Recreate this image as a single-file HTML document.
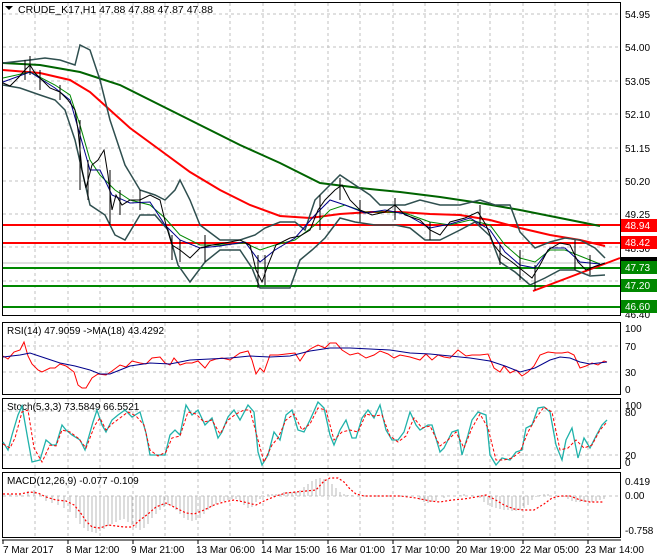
<!DOCTYPE html>
<html><head><meta charset="utf-8"><style>
html,body{margin:0;padding:0;background:#fff;}
svg{display:block;font-family:"Liberation Sans",sans-serif;}
</style></head><body>
<svg width="660" height="560" viewBox="0 0 660 560" xmlns="http://www.w3.org/2000/svg">
<rect width="660" height="560" fill="#fff"/>
<g stroke="#c0c0c0" stroke-dasharray="3,3" stroke-width="1">
<path d="M35 3V316M68 3V316M100 3V316M133 3V316M165 3V316M198 3V316M230 3V316M263 3V316M295 3V316M328 3V316M360 3V316M393 3V316M425 3V316M458 3V316M490 3V316M523 3V316M555 3V316M588 3V316"/>
<path d="M35 323V394M68 323V394M100 323V394M133 323V394M165 323V394M198 323V394M230 323V394M263 323V394M295 323V394M328 323V394M360 323V394M393 323V394M425 323V394M458 323V394M490 323V394M523 323V394M555 323V394M588 323V394"/>
<path d="M35 399V468M68 399V468M100 399V468M133 399V468M165 399V468M198 399V468M230 399V468M263 399V468M295 399V468M328 399V468M360 399V468M393 399V468M425 399V468M458 399V468M490 399V468M523 399V468M555 399V468M588 399V468"/>
<path d="M35 473V537M68 473V537M100 473V537M133 473V537M165 473V537M198 473V537M230 473V537M263 473V537M295 473V537M328 473V537M360 473V537M393 473V537M425 473V537M458 473V537M490 473V537M523 473V537M555 473V537M588 473V537"/>
<path d="M3 14H620M3 47H620M3 81H620M3 114H620M3 148H620M3 181H620M3 214H620M3 247H620M3 281H620"/>
<path d="M3 346H620M3 372H620M3 411H620M3 455H620M3 496H620"/>
</g>
<line x1="3" y1="263" x2="620" y2="263" stroke="#c0c0c0"/>
<line x1="3" y1="225" x2="620" y2="225" stroke="#f00" stroke-width="2"/>
<line x1="3" y1="243" x2="620" y2="243" stroke="#f00" stroke-width="2"/>
<line x1="3" y1="268" x2="620" y2="268" stroke="#080" stroke-width="2"/>
<line x1="3" y1="286" x2="620" y2="286" stroke="#080" stroke-width="2"/>
<line x1="3" y1="307" x2="620" y2="307" stroke="#080" stroke-width="2"/>
<line x1="533" y1="291" x2="620" y2="258" stroke="#f00" stroke-width="2"/>
<polyline fill="none" stroke="#006400" stroke-width="2" points="3,63 40,65 80,72 120,85 160,105 200,125 240,145 280,163 320,183 360,188 400,192 440,197 480,203 520,210 560,218 600,226"/>
<polyline fill="none" stroke="#f00" stroke-width="2" points="3,70 40,73 70,80 90,92 110,110 130,128 160,150 190,172 220,190 250,205 280,216 310,218 340,214 370,212 400,212 430,214 460,215 490,220 520,228 550,235 580,240 605,246"/>
<g fill="none" stroke="#2f4f4f" stroke-width="1.5">
<polyline points="3,63 30,60 45,58 60,60 75,65 80,45 90,50 100,80 110,120 125,165 140,190 155,195 165,200 175,190 180,180 190,200 200,225 220,240 240,240 255,235 265,228 280,222 295,222 305,230 315,200 330,185 340,175 355,185 370,195 380,205 390,205 405,205 420,200 440,205 460,205 480,200 495,205 510,205 520,232 535,248 550,242 565,238 580,240 595,248 605,258"/>
<polyline points="3,85 20,88 40,95 55,100 65,110 75,140 90,205 105,215 115,235 125,240 140,215 155,215 168,230 178,265 190,282 205,262 220,250 240,250 252,268 260,288 275,288 290,288 300,260 312,250 325,238 340,218 355,222 375,225 395,225 410,228 425,240 440,240 460,230 475,222 490,236 500,262 515,272 530,285 545,278 560,270 575,270 590,276 605,275"/>
</g>
<g fill="none" stroke-width="1">
<polyline stroke="#080" points="3,78 30,72 55,85 70,95 80,125 90,160 100,175 115,190 130,200 150,205 165,218 180,235 200,245 220,245 245,243 260,250 275,245 295,240 315,225 330,210 345,205 365,212 385,212 405,213 430,222 450,225 470,220 490,225 505,245 520,258 535,262 550,250 565,250 580,256 600,264"/>
<polyline stroke="#00008b" points="3,82 30,72 55,88 70,100 80,135 90,170 100,170 112,195 130,203 150,202 165,225 180,240 200,248 220,246 245,242 260,262 275,250 295,238 315,215 330,200 345,205 365,213 385,210 405,214 430,228 450,224 470,218 490,230 505,252 520,265 535,268 550,248 565,248 580,262 600,264"/>
</g>
<polyline fill="none" stroke="#000" stroke-width="1" points="3,83 10,86 18,78 25,70 30,65 35,73 42,80 50,88 60,92 68,100 75,110 78,130 82,170 86,188 92,165 98,160 104,150 108,175 112,210 116,195 122,205 130,200 140,200 150,195 160,200 166,225 172,245 180,250 190,258 200,248 212,245 225,243 240,240 250,245 256,270 262,282 268,265 276,245 290,238 300,236 310,230 318,210 325,200 335,190 342,185 350,200 360,210 372,215 385,212 395,205 405,215 420,220 430,230 440,235 450,222 465,218 478,212 486,225 494,245 502,255 512,262 522,270 532,278 540,265 548,250 560,243 570,245 578,262 586,270 596,266 605,263"/>
<g stroke="#000" stroke-width="1">
<path d="M25 60V80M30 56V75M40 70V90M60 85V100M80 120V190M88 160V200M110 170V225M120 190V215M140 190V210M172 235V260M180 240V262M205 235V262M258 255V288M265 255V285M320 195V230M340 178V200M360 200V222M395 198V220M430 222V240M480 205V225M500 245V265M520 250V280M535 265V290M575 240V270M590 255V275"/>
</g>
<g fill="none" stroke="#000" stroke-width="1">
<rect x="2.5" y="2.5" width="618" height="313"/>
<rect x="2.5" y="322.5" width="618" height="72"/>
<rect x="2.5" y="398.5" width="618" height="70"/>
<rect x="2.5" y="472.5" width="618" height="65"/>
</g>
<line x1="2" y1="540" x2="621" y2="540" stroke="#000"/>
<path d="M5 6h8l-4 4z" fill="#000"/>
<text x="18" y="13" font-size="10.5" fill="#000">CRUDE_K17,H1  47.88 47.88 47.87 47.88</text>
<g font-size="10" fill="#000">
<text x="625" y="18">54.95</text><text x="625" y="51">54.00</text><text x="625" y="85">53.05</text><text x="625" y="118">52.10</text><text x="625" y="152">51.15</text><text x="625" y="185">50.20</text><text x="625" y="218">49.25</text><text x="625" y="252">48.30</text><text x="625" y="318">46.40</text>
</g>
<rect x="621" y="219" width="36" height="13" fill="#f00"/><text x="625" y="229" font-size="10" fill="#fff">48.94</text>
<rect x="621" y="236" width="36" height="13" fill="#f00"/><text x="625" y="246" font-size="10" fill="#fff">48.42</text>
<rect x="621" y="257" width="36" height="6" fill="#000"/>
<rect x="621" y="261" width="36" height="13" fill="#080"/><text x="625" y="271" font-size="10" fill="#fff">47.73</text>
<rect x="621" y="279" width="36" height="13" fill="#080"/><text x="625" y="289" font-size="10" fill="#fff">47.20</text>
<rect x="621" y="300" width="36" height="13" fill="#080"/><text x="625" y="310" font-size="10" fill="#fff">46.60</text>
<text x="7" y="334" font-size="10">RSI(14) 47.9059  -&gt;MA(18) 43.4292</text>
<polyline fill="none" stroke="#f00" stroke-width="1" points="3,356 8,359 14,352 20,350 24,342 28,356 32,364 38,370 42,372 50,368 55,368 60,364 66,366 74,372 78,385 82,388 86,388 92,378 98,374 106,375 112,371 120,365 126,367 132,361 140,363 146,364 152,358 160,357 165,363 170,365 174,358 180,365 186,363 192,363 198,361 205,368 210,361 216,359 222,358 230,360 240,353 248,351 252,360 256,374 260,368 264,372 270,355 278,355 286,354 295,353 300,361 306,352 312,348 318,345 325,348 330,343 336,343 342,350 350,355 358,353 366,358 374,355 380,351 388,354 394,358 400,355 410,357 420,360 426,354 432,360 438,355 444,357 450,358 458,350 466,356 472,355 480,355 488,354 494,368 500,372 504,366 510,373 516,370 522,376 528,372 534,366 540,355 548,352 556,353 562,353 568,352 574,355 580,368 586,366 592,363 598,365 604,361 607,362"/>
<polyline fill="none" stroke="#00008b" stroke-width="1" points="3,357 20,355 30,353 45,358 60,363 75,366 90,370 100,374 110,374 120,370 130,366 150,363 170,364 190,360 210,359 230,358 250,356 270,357 290,356 310,351 330,348 350,348 370,349 390,350 410,353 430,354 450,356 470,358 490,361 505,366 520,372 535,368 550,360 560,357 570,358 580,362 590,364 607,362"/>
<g font-size="10"><text x="625" y="332">100</text><text x="625" y="350">70</text><text x="625" y="376">30</text><text x="625" y="393">0</text></g>
<text x="7" y="410" font-size="10">Stoch(5,3,3) 73.5849 66.5521</text>
<polyline fill="none" stroke="#20b2aa" stroke-width="1.3" points="3,442 8,450 12,435 18,415 22,406 28,440 32,462 40,460 46,440 52,445 56,445 62,425 66,430 72,435 80,440 85,450 93,422 97,410 102,425 106,432 112,420 118,415 125,410 132,417 140,412 146,433 150,455 158,455 165,455 170,435 175,430 180,435 186,405 192,415 198,410 205,425 212,418 218,438 222,432 228,417 234,410 240,420 248,405 254,412 258,452 262,465 268,455 274,432 280,440 286,415 292,410 298,430 304,432 310,420 318,402 324,408 330,435 334,445 340,430 346,420 352,438 356,438 362,418 368,410 374,418 380,405 386,430 392,440 398,440 404,432 410,412 416,425 420,430 428,425 432,425 440,452 444,448 452,432 458,430 462,455 468,435 472,420 478,412 486,415 490,455 496,465 502,458 510,460 516,452 522,450 526,428 532,425 538,408 544,407 550,412 556,445 562,460 566,440 572,428 578,458 584,438 590,448 596,436 602,425 607,420"/>
<polyline fill="none" stroke="#f00" stroke-width="1" stroke-dasharray="3,2" points="3,444 10,448 15,438 22,412 28,410 34,448 42,462 50,445 56,446 62,430 70,432 78,438 86,448 95,425 100,418 106,430 112,424 120,418 128,412 136,416 144,425 150,450 158,456 166,452 172,438 180,436 188,412 196,414 204,422 212,420 220,434 228,420 236,414 244,410 250,410 258,440 264,462 272,445 278,438 286,420 294,414 302,430 310,424 318,408 326,410 334,440 342,432 350,430 358,432 366,414 374,416 382,415 390,436 398,442 406,436 414,418 422,428 430,426 440,446 448,440 456,432 464,448 472,428 480,414 488,428 496,460 504,460 512,458 520,452 528,432 536,418 544,407 552,412 560,450 568,448 576,440 584,448 592,445 600,430 607,422"/>
<g font-size="10"><text x="625" y="409">100</text><text x="625" y="416">80</text><text x="625" y="459">20</text><text x="625" y="466">0</text></g>
<text x="7" y="484" font-size="10">MACD(12,26,9) -0.077 -0.109</text>
<g stroke="#b8b8b8" stroke-width="1">
<path d="M10 496V494M20 496V493M28 496V491M34 496V490M40 496V494M46 496V501M52 496V503M58 496V505M64 496V508M70 496V512M76 496V518M80 496V524M84 496V528M88 496V531M92 496V532M96 496V533M100 496V531M104 496V529M108 496V526M112 496V524M116 496V522M120 496V520M124 496V519M128 496V522M132 496V525M136 496V528M140 496V530M144 496V528M148 496V524M152 496V518M156 496V514M160 496V510M164 496V507M168 496V505M172 496V506M176 496V510M180 496V514M184 496V518M188 496V520M192 496V521M196 496V520M200 496V518M204 496V514M208 496V510M212 496V507M216 496V504M220 496V502M224 496V501M228 496V500M232 496V499M236 496V499M240 496V501M244 496V505M248 496V508M252 496V507M256 496V502M260 496V499M264 496V497M268 496V494M272 496V494M276 496V494M280 496V494M284 496V492M288 496V492M292 496V492M296 496V492M300 496V490M304 496V487M308 496V484M312 496V481M316 496V479M320 496V478M324 496V479M328 496V480M332 496V484M336 496V488M340 496V492M344 496V494M348 496V495M352 496V495M360 496V496M420 496V500M424 496V502M428 496V503M432 496V502M436 496V501M444 496V498M460 496V495M464 496V494M472 496V495M480 496V498M484 496V502M488 496V505M492 496V507M496 496V508M500 496V509M504 496V510M508 496V510M512 496V511M516 496V511M520 496V510M524 496V508M528 496V505M532 496V500M536 496V497M540 496V495M544 496V494M548 496V494M556 496V495M564 496V497M568 496V499M572 496V501M576 496V502M580 496V502M584 496V502M588 496V502M592 496V502M596 496V501M600 496V500M604 496V499"/>
</g>
<polyline fill="none" stroke="#f00" stroke-width="1.2" stroke-dasharray="2,2" points="3,494 20,494 30,492 38,493 46,497 56,500 66,501 74,505 80,512 86,521 92,527 100,528 108,525 116,526 124,527 132,527 140,520 148,514 156,507 166,503 176,508 186,513 194,514 204,510 214,505 224,502 234,500 244,502 256,505 266,500 276,496 286,493 296,492 306,491 316,490 324,481 330,478 338,478 344,482 350,489 356,494 364,496 380,496 400,496 416,498 430,501 440,502 452,500 464,499 476,497 486,495 494,499 504,505 514,509 524,510 534,510 544,504 552,498 560,496 570,496 580,500 590,502 604,502"/>
<g font-size="10"><text x="625" y="499">0.00</text><text x="625" y="485">0.419</text><text x="625" y="534">-0.758</text></g>
<g stroke="#000"><path d="M3 540v4M68 540v4M133 540v4M198 540v4M263 540v4M328 540v4M393 540v4M458 540v4M523 540v4M588 540v4"/></g>
<g font-size="10"><text x="3" y="553">7 Mar 2017</text><text x="66" y="553">8 Mar 12:00</text><text x="131" y="553">9 Mar 21:00</text><text x="196" y="553">13 Mar 06:00</text><text x="261" y="553">14 Mar 15:00</text><text x="326" y="553">16 Mar 01:00</text><text x="391" y="553">17 Mar 10:00</text><text x="456" y="553">20 Mar 19:00</text><text x="520" y="553">22 Mar 05:00</text><text x="585" y="553">23 Mar 14:00</text></g>
</svg>
</body></html>
